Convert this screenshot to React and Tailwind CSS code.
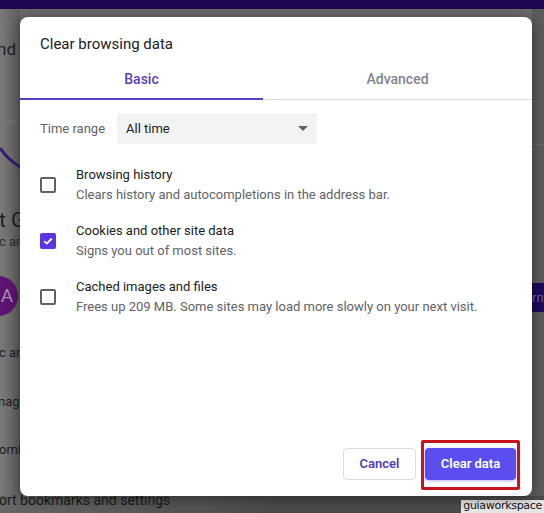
import { useState } from "react"

const items = [
  {
    id: "history",
    title: "Browsing history",
    desc: "Clears history and autocompletions in the address bar.",
    checked: false,
  },
  {
    id: "cookies",
    title: "Cookies and other site data",
    desc: "Signs you out of most sites.",
    checked: true,
  },
  {
    id: "cache",
    title: "Cached images and files",
    desc: "Frees up 209 MB. Some sites may load more slowly on your next visit.",
    checked: false,
  },
]

function Checkbox({ checked, onClick }) {
  if (checked) {
    return (
      <button
        onClick={onClick}
        className="w-[16px] h-[16px] rounded-[2px] bg-[#5b36e0] flex items-center justify-center shrink-0"
      >
        <svg width="12" height="12" viewBox="0 0 12 12" fill="none">
          <path d="M2.3 6.2 4.8 8.6 9.8 3.5" stroke="white" strokeWidth="1.8" />
        </svg>
      </button>
    )
  }
  return (
    <button
      onClick={onClick}
      className="w-[16px] h-[16px] rounded-[2px] border-2 border-[#5f6368] shrink-0"
    />
  )
}

// dimmed settings page sitting behind the dialog
function BackgroundPage() {
  return (
    <div className="w-full h-full flex flex-col bg-[#6b6b6b] text-[#1f1f1f]">
      <div className="h-[9px] bg-[#1f0650] shrink-0" />
      <div className="flex-1 flex">
        <div className="w-[20px] shrink-0 overflow-hidden bg-gradient-to-r from-[#7a7a7a] to-[#5f5f5f] flex flex-col whitespace-nowrap">
          <div className="mt-[29px] ml-[-3px] text-[17px] leading-[22px]">nd Google</div>
          <svg className="mt-[50px] shrink-0" width="20" height="97" viewBox="0 110 20 97">
            <path d="M0 125 Q8 121 16 121" fill="none" stroke="#7c7c7c" strokeWidth="1" />
            <path d="M0 148 Q9 161 22 168" fill="none" stroke="#341a70" strokeWidth="3" />
          </svg>
          <div className="ml-[-1px] text-[21px] leading-[26px]">t Google</div>
          <div className="ml-[-1px] text-[13px] leading-[18px] text-[#2c2c2c]">c and</div>
          <div className="mt-[25px] ml-[-22px] w-[40px] h-[40px] rounded-full bg-[#5c1470] text-[#a88fb5] flex items-center justify-center text-[19px] shrink-0">
            <span className="ml-[18px]">A</span>
          </div>
          <div className="mt-[28px] ml-[-1px] text-[13px] leading-[18px]">c and</div>
          <div className="mt-[31px] ml-[-2px] text-[13px] leading-[18px]">nage</div>
          <div className="mt-[30px] ml-[-1px] text-[13px] leading-[18px]">omi</div>
        </div>
        <div className="flex-1" />
        <div className="w-[12px] shrink-0 overflow-hidden bg-[#5c5c5c] flex flex-col">
          <div className="mt-[135px] h-px bg-[#6a6a6a]" />
          <div className="mt-[138px] h-[29px] bg-[#1f0a5c] text-[#6c6190] text-[13px] leading-[29px] whitespace-nowrap">rn on</div>
        </div>
      </div>
      <div className="h-[17px] shrink-0 bg-gradient-to-r from-[#666] via-[#4b4b4b] to-[#4b4b4b] flex items-end justify-between">
        <div className="text-[14px] leading-[16px] text-[#1a1a1a] ml-[-1px] mb-[5px] whitespace-nowrap">ort bookmarks and settings</div>
        <div className="bg-[#e6e6e6] text-[#111] text-[11px] leading-[12px] px-[2px] pb-px font-['DejaVu_Sans',sans-serif] tracking-[-0.3px]">guiaworkspace</div>
      </div>
    </div>
  )
}

export default function App() {
  const [tab, setTab] = useState("basic")
  const [checked, setChecked] = useState(
    Object.fromEntries(items.map((i) => [i.id, i.checked]))
  )

  return (
    <div className="relative w-[544px] h-[513px] overflow-hidden font-['Roboto',sans-serif]">
      <BackgroundPage />

      {/* modal */}
      <div className="absolute left-[20px] top-[17px] w-[512px] h-[479px] bg-white rounded-lg shadow-[0_2px_14px_rgba(0,0,0,0.45)] flex flex-col">
        <h2 className="pt-[17px] px-[20px] text-[15px] leading-[21px] text-[#202124]">Clear browsing data</h2>

        <div className="mt-[3px] flex border-b border-[#dadce0]">
          <button
            onClick={() => setTab("basic")}
            className={`w-[243px] h-[42px] pt-[2px] -mb-px text-[14px] font-medium border-b-2 ${
              tab === "basic" ? "text-[#5b3fb8] border-[#5b3cc4]" : "text-[#80868b] border-transparent"
            }`}
          >
            Basic
          </button>
          <button
            onClick={() => setTab("advanced")}
            className={`flex-1 h-[42px] pt-[2px] -mb-px text-[14px] font-medium border-b-2 ${
              tab === "advanced" ? "text-[#5b3fb8] border-[#5b3cc4]" : "text-[#80868b] border-transparent"
            }`}
          >
            Advanced
          </button>
        </div>

        <div className="mt-[13px] px-[20px] flex items-center">
          <span className="w-[77px] text-[13px] text-[#5f6368]">Time range</span>
          <div className="w-[200px] h-[31px] bg-[#f1f3f4] rounded-[3px] flex items-center justify-between pl-[9px] pr-[9px]">
            <span className="text-[13px] text-[#202124]">All time</span>
            <svg width="10" height="5" viewBox="0 0 10 5">
              <path d="M0 0h10L5 5z" fill="#5f6368" />
            </svg>
          </div>
        </div>

        <div className="mt-[21px] px-[20px] flex flex-col gap-[16px]">
          {items.map((item) => (
            <div key={item.id} className="flex items-center">
              <Checkbox
                checked={checked[item.id]}
                onClick={() => setChecked({ ...checked, [item.id]: !checked[item.id] })}
              />
              <div className="ml-[20px] flex flex-col">
                <span className="text-[13px] leading-[20px] text-[#202124]">{item.title}</span>
                <span className="text-[13px] leading-[20px] text-[#5f6368]">{item.desc}</span>
              </div>
            </div>
          ))}
        </div>

        <div className="mt-auto pb-[16px] pr-[16px] flex justify-end gap-[9px]">
          <button className="w-[73px] h-[32px] rounded-[4px] border border-[#dadce0] text-[13px] font-semibold text-[#4f3bb5]">
            Cancel
          </button>
          <div className="relative">
            <button className="w-[91px] h-[32px] rounded-[4px] bg-[#5a4ef0] text-[13px] font-semibold text-white shadow-[0_1px_3px_rgba(60,40,200,0.35)]">
              Clear data
            </button>
            {/* red highlight box from the screenshot annotation */}
            <div className="absolute left-[-4px] top-[-8px] right-[-4px] bottom-[-10px] border-[3px] border-[#c8121c] rounded-[2px] pointer-events-none" />
          </div>
        </div>
      </div>
    </div>
  )
}
